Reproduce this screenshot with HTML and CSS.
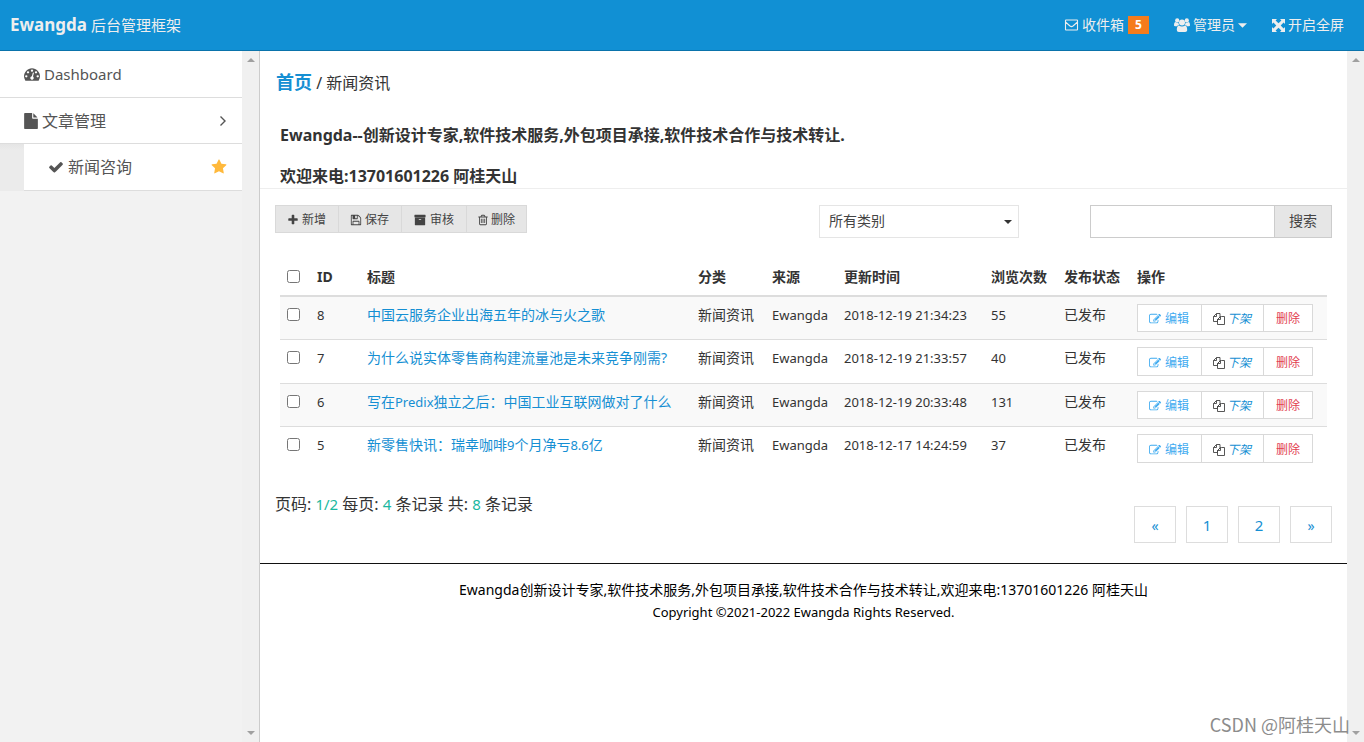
FILE: index.html
```html
<!DOCTYPE html>
<html lang="zh-CN">
<head>
<meta charset="utf-8">
<title>Ewangda 后台管理框架</title>
<link rel="stylesheet" href="styles.css">
</head>
<body>
<svg class="sprite" aria-hidden="true">
  <symbol id="dashboard" viewBox="0 0 1792 1792"><path d="M384 1152q0-53-37.500-90.500t-90.500-37.500-90.500 37.500-37.500 90.500 37.500 90.500 90.500 37.500 90.500-37.500 37.500-90.500zm192-448q0-53-37.500-90.500t-90.500-37.500-90.500 37.500-37.500 90.500 37.500 90.500 90.500 37.500 90.500-37.500 37.500-90.500zm428 481l101-382q6-26-7.500-48.500t-38.500-29.500-48 6.500-30 39.500l-101 382q-60 5-107 43.500t-63 98.500q-20 77 20 146t117 89 146-20 89-117q16-60-6-117t-72-91zm660-33q0-53-37.500-90.500t-90.500-37.500-90.500 37.500-37.500 90.500 37.500 90.500 90.500 37.500 90.500-37.500 37.500-90.500zm-640-640q0-53-37.500-90.500t-90.500-37.500-90.500 37.500-37.500 90.500 37.500 90.500 90.500 37.500 90.500-37.500 37.500-90.500zm448 192q0-53-37.500-90.500t-90.500-37.500-90.500 37.500-37.500 90.500 37.500 90.500 90.500 37.500 90.500-37.500 37.500-90.500zm320 448q0 261-141 483-19 29-54 29h-1402q-35 0-54-29-141-221-141-483 0-182 71-348t191-286 286-191 348-71 348 71 286 191 191 286 71 348z"/></symbol>
  <symbol id="file" viewBox="128 0 1536 1792"><path d="M1152 512v-472q22 14 36 28l408 408q14 14 28 36h-472zm-128 32q0 40 28 68t68 28h544v1056q0 40-28 68t-68 28h-1344q-40 0-68-28t-28-68v-1600q0-40 28-68t68-28h800v544z"/></symbol>
  <symbol id="check" viewBox="0 0 1792 1792"><path d="M1671 566q0 40-28 68l-724 724-136 136q-28 28-68 28t-68-28l-136-136-362-362q-28-28-28-68t28-68l136-136q28-28 68-28t68 28l294 295 656-657q28-28 68-28t68 28l136 136q28 28 28 68z"/></symbol>
  <symbol id="star" viewBox="0 0 1792 1792"><path d="M1728 647q0 22-26 48l-363 354 86 500q1 7 1 20 0 21-10.500 35.500t-30.500 14.500q-19 0-40-12l-449-236-449 236q-22 12-40 12-21 0-31.500-14.500t-10.500-35.500q0-6 2-20l86-500-364-354q-25-27-25-48 0-37 56-46l502-73 225-455q19-41 49-41t49 41l225 455 502 73q56 9 56 46z"/></symbol>
  <symbol id="angle" viewBox="0 0 8 12"><path d="M1.500 1.500 6 6l-4.500 4.500" fill="none" stroke="currentColor" stroke-width="1.400"/></symbol>
  <symbol id="plus" viewBox="0 0 1792 1792"><path d="M1600 736v192q0 40-28 68t-68 28h-416v416q0 40-28 68t-68 28h-192q-40 0-68-28t-28-68v-416h-416q-40 0-68-28t-28-68v-192q0-40 28-68t68-28h416v-416q0-40 28-68t68-28h192q40 0 68 28t28 68v416h416q40 0 68 28t28 68z"/></symbol>
  <symbol id="save" viewBox="0 0 1792 1792"><path d="M512 1536h768v-384h-768v384zm896 0h128v-896q0-14-10-38.500t-20-34.500l-281-281q-10-10-34-20t-39-10v416q0 40-28 68t-68 28h-576q-40 0-68-28t-28-68v-416h-128v1280h128v-416q0-40 28-68t68-28h832q40 0 68 28t28 68v416zm-384-928v-320q0-13-9.500-22.500t-22.500-9.500h-192q-13 0-22.500 9.500t-9.500 22.500v320q0 13 9.500 22.500t22.500 9.500h192q13 0 22.500-9.500t9.500-22.500zm640 32v928q0 40-28 68t-68 28h-1344q-40 0-68-28t-28-68v-1344q0-40 28-68t68-28h928q40 0 88 20t76 48l280 280q28 28 48 76t20 88z"/></symbol>
  <symbol id="archive" viewBox="0 0 1792 1792"><path d="M1088 832q0-26-19-45t-45-19h-256q-26 0-45 19t-19 45 19 45 45 19h256q26 0 45-19t19-45zm576-192v960q0 26-19 45t-45 19h-1408q-26 0-45-19t-19-45v-960q0-26 19-45t45-19h1408q26 0 45 19t19 45zm64-448v256q0 26-19 45t-45 19h-1536q-26 0-45-19t-19-45v-256q0-26 19-45t45-19h1536q26 0 45 19t19 45z"/></symbol>
  <symbol id="trash" viewBox="192 0 1408 1792"><path d="M704 736v576q0 14-9 23t-23 9h-64q-14 0-23-9t-9-23v-576q0-14 9-23t23-9h64q14 0 23 9t9 23zm256 0v576q0 14-9 23t-23 9h-64q-14 0-23-9t-9-23v-576q0-14 9-23t23-9h64q14 0 23 9t9 23zm256 0v576q0 14-9 23t-23 9h-64q-14 0-23-9t-9-23v-576q0-14 9-23t23-9h64q14 0 23 9t9 23zm128 724v-948h-896v948q0 22 7 40.500t14.500 27 10.500 8.500h832q3 0 10.500-8.500t14.500-27 7-40.500zm-672-1076h448l-48-117q-7-9-17-11h-317q-10 2-17 11zm928 32v64q0 14-9 23t-23 9h-96v948q0 83-47 143.500t-113 60.500h-832q-66 0-113-58.500t-47-141.500v-952h-96q-14 0-23-9t-9-23v-64q0-14 9-23t23-9h309l70-167q15-37 54-63t79-26h320q40 0 79 26t54 63l70 167h309q14 0 23 9t9 23z"/></symbol>
  <symbol id="edit" viewBox="0 0 1792 1792"><path d="M888 1184l116-116-152-152-116 116v56h96v96h56zm440-720q-16-16-33 1l-350 350q-17 17-1 33t33-1l350-350q17-17 1-33zm80 594v190q0 119-84.500 203.500t-203.500 84.500h-832q-119 0-203.500-84.500t-84.500-203.500v-832q0-119 84.500-203.500t203.500-84.500h832q63 0 117 25 15 7 18 23 3 17-9 29l-49 49q-14 14-32 8-23-6-45-6h-832q-66 0-113 47t-47 113v832q0 66 47 113t113 47h832q66 0 113-47t47-113v-126q0-13 9-22l64-64q15-15 35-7t20 29zm-96-738l288 288-672 672h-288v-288zm444 132l-92 92-288-288 92-92q28-28 68-28t68 28l152 152q28 28 28 68t-28 68z"/></symbol>
  <symbol id="files" viewBox="0 0 12 12"><path d="M3.500.500H7V4L4.500 6.500v2H.500v-5zm0 0v3h-3M8.500 3.500h3v8h-7v-5l3-3h1m-1 0v3h-3" fill="none" stroke="currentColor" stroke-width=".9" stroke-linejoin="round"/></symbol>
  <symbol id="mail" viewBox="0 0 14 12"><path d="M1.500 1h11q.5 0 .5.500v9q0 .5-.5.500h-11q-.5 0-.5-.5v-9q0-.5.500-.5zM1 3l4.500 4Q7 8.200 8.500 7L13 3" fill="none" stroke="currentColor" stroke-width="1.100"/></symbol>
  <symbol id="users" viewBox="0 0 16 14"><circle cx="3.200" cy="2.400" r="2.100"/><circle cx="12.800" cy="2.400" r="2.100"/><circle cx="8" cy="4.500" r="3"/><path d="M0 7.500C0 5.500.6 4 1.500 4q1.600 1.200 3 .5Q4.400 6 5.200 7 3.800 7 3 8.200H1.200Q0 8.200 0 7.500zM16 7.500C16 5.500 15.400 4 14.500 4q-1.600 1.200-3 .5.100 1.500-.7 2.500 1.400 0 2.200 1.200h1.800q1.200 0 1.200-.7zM2.800 12C2.800 9 3.700 7.400 5 7.400q3 2 6 0c1.300 0 2.200 1.600 2.200 4.600 0 1.200-.8 2-2 2H4.800q-2 0-2-2z"/></symbol>
  <symbol id="expand" viewBox="0 0 13 13"><path d="M0 0h5L3.600 1.400 6.500 4.300 9.400 1.400 8 0h5v5l-1.400-1.400L8.700 6.500l2.900 2.900L13 8v5H8l1.400-1.400-2.900-2.900-2.900 2.900L5 13H0V8l1.400 1.400 2.900-2.900-2.900-2.900L0 5z"/></symbol>
  <symbol id="caret" viewBox="0 0 8 4"><path d="M0 0h8L4 4z"/></symbol>
  <symbol id="up" viewBox="0 0 8 4"><path d="M0 4h8L4 0z"/></symbol>
</svg>

<header class="topbar">
  <div class="brand"><strong>Ewangda</strong><small>后台管理框架</small></div>
  <nav class="topnav">
    <a href="#"><svg class="i14"><use href="#mail"/></svg>收件箱<span class="badge">5</span></a>
    <a href="#"><svg class="i16"><use href="#users"/></svg>管理员<svg class="caret"><use href="#caret"/></svg></a>
    <a href="#"><svg class="i13"><use href="#expand"/></svg>开启全屏</a>
  </nav>
</header>

<div class="shell">
  <aside class="sidebar">
    <nav class="menu">
      <a class="item" href="#"><svg class="i16"><use href="#dashboard"/></svg><span class="latin">Dashboard</span></a>
      <a class="item parent" href="#"><svg class="doc"><use href="#file"/></svg>文章管理<svg class="end angle"><use href="#angle"/></svg></a>
      <div class="submenu">
        <a class="item" href="#"><svg class="i16"><use href="#check"/></svg>新闻咨询<svg class="end i16 star"><use href="#star"/></svg></a>
      </div>
    </nav>
    <div class="scroll"><svg class="caret"><use href="#up"/></svg><svg class="caret"><use href="#caret"/></svg></div>
  </aside>

  <main class="content">
    <div class="crumbs"><a href="#">首页</a> / 新闻资讯</div>
    <div class="headline">
      <h4>Ewangda--创新设计专家,软件技术服务,外包项目承接,软件技术合作与技术转让.</h4>
      <h4>欢迎来电:13701601226 阿桂天山</h4>
    </div>

    <form class="tools">
      <div class="group gray">
        <button type="button"><svg class="i12"><use href="#plus"/></svg>新增</button>
        <button type="button"><svg class="i12"><use href="#save"/></svg>保存</button>
        <button type="button"><svg class="box"><use href="#archive"/></svg>审核</button>
        <button type="button"><svg class="bin"><use href="#trash"/></svg>删除</button>
      </div>
      <div class="picker">
        <select aria-label="类别"><option>所有类别</option></select>
        <svg class="caret"><use href="#caret"/></svg>
      </div>
      <div class="search">
        <input type="text" aria-label="搜索内容">
        <button type="button">搜索</button>
      </div>
    </form>

    <table class="list">
      <colgroup><col class="c-check"><col class="c-id"><col><col class="c-kind"><col class="c-from"><col class="c-time"><col class="c-num"><col class="c-num"><col class="c-ops"></colgroup>
      <thead>
        <tr><th><input type="checkbox" aria-label="全选"></th><th>ID</th><th>标题</th><th>分类</th><th>来源</th><th>更新时间</th><th>浏览次数</th><th>发布状态</th><th>操作</th></tr>
      </thead>
      <tbody>
        <tr><td><input type="checkbox" aria-label="选择 8"></td><td class="latin">8</td><td><a href="#">中国云服务企业出海五年的冰与火之歌</a></td><td>新闻资讯</td><td class="latin">Ewangda</td><td class="latin">2018-12-19 21:34:23</td><td class="latin">55</td><td>已发布</td>
          <td class="ops"><div class="group"><button type="button" class="edit"><svg class="i12"><use href="#edit"/></svg>编辑</button><button type="button" class="down"><svg class="i12"><use href="#files"/></svg><i>下架</i></button><button type="button" class="del">删除</button></div></td></tr>
        <tr><td><input type="checkbox" aria-label="选择 7"></td><td class="latin">7</td><td><a href="#">为什么说实体零售商构建流量池是未来竞争刚需?</a></td><td>新闻资讯</td><td class="latin">Ewangda</td><td class="latin">2018-12-19 21:33:57</td><td class="latin">40</td><td>已发布</td>
          <td class="ops"><div class="group"><button type="button" class="edit"><svg class="i12"><use href="#edit"/></svg>编辑</button><button type="button" class="down"><svg class="i12"><use href="#files"/></svg><i>下架</i></button><button type="button" class="del">删除</button></div></td></tr>
        <tr><td><input type="checkbox" aria-label="选择 6"></td><td class="latin">6</td><td><a href="#">写在<span class="latin">Predix</span>独立之后：中国工业互联网做对了什么</a></td><td>新闻资讯</td><td class="latin">Ewangda</td><td class="latin">2018-12-19 20:33:48</td><td class="latin">131</td><td>已发布</td>
          <td class="ops"><div class="group"><button type="button" class="edit"><svg class="i12"><use href="#edit"/></svg>编辑</button><button type="button" class="down"><svg class="i12"><use href="#files"/></svg><i>下架</i></button><button type="button" class="del">删除</button></div></td></tr>
        <tr><td><input type="checkbox" aria-label="选择 5"></td><td class="latin">5</td><td><a href="#">新零售快讯：瑞幸咖啡<span class="latin">9</span>个月净亏<span class="latin">8.6</span>亿</a></td><td>新闻资讯</td><td class="latin">Ewangda</td><td class="latin">2018-12-17 14:24:59</td><td class="latin">37</td><td>已发布</td>
          <td class="ops"><div class="group"><button type="button" class="edit"><svg class="i12"><use href="#edit"/></svg>编辑</button><button type="button" class="down"><svg class="i12"><use href="#files"/></svg><i>下架</i></button><button type="button" class="del">删除</button></div></td></tr>
      </tbody>
    </table>

    <div class="paging">
      <p>页码: <span>1/2</span> 每页: <span>4</span> 条记录 共: <span>8</span> 条记录</p>
      <nav class="pages" aria-label="分页"><a href="#">«</a><a class="num" href="#">1</a><a class="num" href="#">2</a><a href="#">»</a></nav>
    </div>

    <footer class="foot">
      <div>Ewangda创新设计专家,软件技术服务,外包项目承接,软件技术合作与技术转让,欢迎来电:13701601226 阿桂天山</div>
      <div class="latin">Copyright ©2021-2022 Ewangda Rights Reserved.</div>
    </footer>
  </main>
  <div class="scroll"><svg class="caret"><use href="#up"/></svg><svg class="caret"><use href="#caret"/></svg></div>
</div>
<div class="watermark">CSDN @阿桂天山</div>
</body>
</html>
```

FILE: styles.css
```css
* { box-sizing: border-box; }
body {
  margin: 0;
  height: 100vh;
  display: flex;
  flex-direction: column;
  overflow: hidden;
  position: relative;
  background: #fff;
  color: #333;
  font: 14px/20px "Noto Sans", "Noto Sans CJK SC", sans-serif;
}
a { color: #158fd3; text-decoration: none; }
button, input, select { font: inherit; color: inherit; border-radius: 0; }
svg { fill: currentColor; flex: none; }
.sprite { position: absolute; width: 0; height: 0; }
.latin { font-size: 13px; }
.i12 { width: 12px; height: 12px; }
.i13 { width: 13px; height: 13px; }
.i14 { width: 15px; height: 12px; }
.i16 { width: 16px; height: 16px; }
.caret { width: 8px; height: 4px; }

.topbar {
  height: 51px;
  flex: none;
  display: flex;
  justify-content: space-between;
  align-items: center;
  padding: 0 20px 0 10px;
  background: #1190d4;
  border-bottom: 1px solid #0a73ab;
  color: #eee;
}
.brand { display: flex; align-items: baseline; gap: 4px; line-height: 24px; }
.brand strong { font-size: 17px; }
.brand small { font-size: 15px; }
.topnav { display: flex; gap: 25px; }
.topnav a { display: flex; align-items: center; gap: 3px; color: #eee; }
.topnav .i16 { height: 14px; }
.topnav .caret { width: 9px; height: 5px; }
.badge {
  width: 21px;
  height: 18px;
  margin-left: 1px;
  background: #f57c1c;
  color: #fff;
  font: bold 12px/18px "Noto Sans", sans-serif;
  text-align: center;
}

.shell { flex: 1; display: flex; min-height: 0; }
.sidebar { width: 260px; flex: none; display: flex; background: #f2f2f2; border-right: 1px solid #ccc; }
.menu { flex: 1; color: #555; }
.item {
  height: 47px;
  display: flex;
  align-items: center;
  gap: 4px;
  padding: 0 15px 0 24px;
  background: #fff;
  border-bottom: 1px solid #ddd;
  color: #555;
  font-size: 16px;
}
.item .latin { font-size: 15px; }
.item.parent { height: 46px; }
.doc { width: 14px; height: 16px; }
.end { margin-left: auto; }
.angle { width: 8px; height: 12px; }
.star { color: #ffb93c; }
.submenu { padding-left: 24px; background: linear-gradient(#e5e5e5, #ebebeb 6px); }
.scroll {
  width: 17px;
  flex: none;
  display: flex;
  flex-direction: column;
  justify-content: space-between;
  align-items: center;
  padding: 7px 0;
  background: #f0f0f0;
  color: #a0a0a0;
}

.content { flex: 1; min-width: 0; overflow: hidden; }
.crumbs { padding: 19px 16px 0; font-size: 16px; line-height: 24px; }
.crumbs a { font-size: 18px; font-weight: bold; }
.headline { padding: 28px 20px 0; border-bottom: 1px solid #eee; }
.headline h4 { margin: 0 0 17px; font-size: 16px; line-height: 24px; }
.headline h4:last-child { margin: 0; }

.tools { display: flex; align-items: flex-start; padding: 16px 15px 0; }
.group { display: inline-flex; }
.group button {
  height: 28px;
  display: flex;
  align-items: center;
  gap: 3px;
  padding: 2px 11px 0;
  margin: 0 0 0 -1px;
  border: 1px solid #d9d9d9;
  background: #fff;
  font-size: 12px;
  line-height: 18px;
}
.group button:first-child { margin-left: 0; }
.gray button { background: #e6e6e6; color: #444; }
.gray button:not(:last-child) { padding-right: 12px; }
.box { width: 14px; height: 12px; }
.bin { width: 10px; height: 12px; }
.picker { position: relative; width: 200px; margin-left: auto; }
.picker select {
  width: 100%;
  height: 33px;
  padding: 0 9px 2px;
  appearance: none;
  border: 1px solid #e5e5e5;
  background: #fff;
  color: #444;
}
.picker .caret { position: absolute; right: 7px; top: 15px; }
.search { display: flex; width: 242px; height: 33px; margin-left: 71px; }
.search input { flex: 1; min-width: 0; border: 1px solid #ccc; padding: 0 8px; }
.search button { width: 58px; margin-left: -1px; padding: 0 0 2px; border: 1px solid #ccc; background: #e6e6e6; color: #444; }

.list { width: calc(100% - 40px); margin: 21px 20px 0; table-layout: fixed; border-collapse: separate; border-spacing: 0; }
.c-check { width: 29px; }
.c-id { width: 50px; }
.c-kind { width: 74px; }
.c-from { width: 72px; }
.c-time { width: 147px; }
.c-num { width: 73px; }
.c-ops { width: 198px; }
.list th { padding: 8px; text-align: left; border-bottom: 2px solid #ddd; white-space: nowrap; }
.list td { padding: 8px; vertical-align: top; border-bottom: 1px solid #ddd; white-space: nowrap; }
.list tbody tr:last-child td { border-bottom: 0; }
.list tbody tr:nth-child(odd) { background: #f9f9f9; }
.list input { display: block; width: 13px; height: 13px; margin: 3px 0 4px -1px; }
.list .ops { padding: 7px 8px; }
.list .group { display: flex; }
.list tr:nth-child(even) .group button { height: 29px; }
.group .edit { gap: 4px; padding-right: 12px; color: #3fabf0; }
.group .down { gap: 2px; padding-right: 12px; color: #444; }
.down i { color: #158fd3; }
.group .del { padding: 2px 12px 0; color: #e2414f; }

.paging { display: flex; justify-content: space-between; align-items: flex-start; padding: 22px 15px 20px; }
.paging p { margin: 0; font-size: 16px; line-height: 24px; }
.paging span { color: #1ab8a0; font-size: 15px; }
.pages { display: flex; gap: 10px; padding-top: 14px; }
.pages a { width: 42px; height: 37px; border: 1px solid #ddd; line-height: 37px; text-align: center; }
.pages .num { font-size: 15px; }

.foot { padding: 15px; border-top: 1px solid #111; color: #000; line-height: 22px; text-align: center; }
.watermark {
  position: absolute;
  right: 14px;
  bottom: 6px;
  color: #8c8c8c;
  font: 18px/24px "Noto Sans CJK SC", sans-serif;
}
```
